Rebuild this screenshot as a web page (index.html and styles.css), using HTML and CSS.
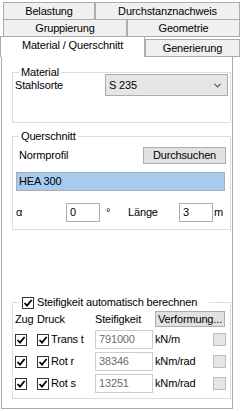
FILE: index.html
```html
<!DOCTYPE html>
<html lang="de">
<head>
  <meta charset="UTF-8">
  <title>Material / Querschnitt</title>
  <link rel="stylesheet" href="styles.css">
</head>
<body>

  <!-- Tab headers (multi-line, selected row at the bottom) -->
  <div class="tabs">
    <div class="tab-row row-top">
      <div class="tab tab-belastung">Belastung</div>
      <div class="tab tab-durchstanz">Durchstanznachweis</div>
    </div>
    <div class="tab-row row-mid">
      <div class="tab tab-gruppierung">Gruppierung</div>
      <div class="tab tab-geometrie">Geometrie</div>
    </div>
    <div class="tab-row row-active">
      <div class="tab tab-selected">Material / Querschnitt</div>
      <div class="tab tab-generierung">Generierung</div>
    </div>
  </div>

  <div class="panel">

    <!-- Material -->
    <fieldset class="group group-material">
      <legend>Material</legend>
      <div class="material-row">
        <span>Stahlsorte</span>
        <div class="combo">
          <span>S 235</span>
          <svg width="7" height="5" viewBox="0 0 7 5"><path d="M0.5 0.8 L3.5 3.8 L6.5 0.8" fill="none" stroke="#5a5a5a" stroke-width="1.2"/></svg>
        </div>
      </div>
    </fieldset>

    <!-- Querschnitt -->
    <fieldset class="group group-section">
      <legend>Querschnitt</legend>
      <div class="profile-head">
        <span>Normprofil</span>
        <div class="button btn-search">Durchsuchen</div>
      </div>
      <div class="profile-name">HEA 300</div>
      <div class="angle-row">
        <span>&alpha;</span>
        <div class="text-input">0</div>
        <span class="degree">&deg;</span>
        <span>Länge</span>
        <div class="text-input">3</div>
        <span class="meter">m</span>
      </div>
    </fieldset>

    <!-- Steifigkeit -->
    <fieldset class="group group-stiff">
      <legend class="legend-check">
        <span class="check"><svg viewBox="0 0 10 10" width="10" height="10"><path d="M1.5 5 L4 7.6 L8.6 2" fill="none" stroke="#000" stroke-width="1.8"/></svg></span>
        <span>Steifigkeit automatisch berechnen</span>
      </legend>
      <div class="stiff-grid">
        <span>Zug</span>
        <span>Druck</span>
        <span>Steifigkeit</span>
        <div class="button btn-deform">Verformung...</div>

        <span class="check"><svg viewBox="0 0 10 10" width="10" height="10"><path d="M1.5 5 L4 7.6 L8.6 2" fill="none" stroke="#000" stroke-width="1.8"/></svg></span>
        <div class="check-label">
          <span class="check"><svg viewBox="0 0 10 10" width="10" height="10"><path d="M1.5 5 L4 7.6 L8.6 2" fill="none" stroke="#000" stroke-width="1.8"/></svg></span>
          <span>Trans t</span>
        </div>
        <div class="value-input">791000</div>
        <span>kN/m</span>
        <span class="flag"></span>

        <span class="check"><svg viewBox="0 0 10 10" width="10" height="10"><path d="M1.5 5 L4 7.6 L8.6 2" fill="none" stroke="#000" stroke-width="1.8"/></svg></span>
        <div class="check-label">
          <span class="check"><svg viewBox="0 0 10 10" width="10" height="10"><path d="M1.5 5 L4 7.6 L8.6 2" fill="none" stroke="#000" stroke-width="1.8"/></svg></span>
          <span>Rot r</span>
        </div>
        <div class="value-input">38346</div>
        <span>kNm/rad</span>
        <span class="flag"></span>

        <span class="check"><svg viewBox="0 0 10 10" width="10" height="10"><path d="M1.5 5 L4 7.6 L8.6 2" fill="none" stroke="#000" stroke-width="1.8"/></svg></span>
        <div class="check-label">
          <span class="check"><svg viewBox="0 0 10 10" width="10" height="10"><path d="M1.5 5 L4 7.6 L8.6 2" fill="none" stroke="#000" stroke-width="1.8"/></svg></span>
          <span>Rot s</span>
        </div>
        <div class="value-input">13251</div>
        <span>kNm/rad</span>
        <span class="flag"></span>
      </div>
    </fieldset>

  </div>

</body>
</html>
```

FILE: styles.css
```css
/* General Reset */
* {
  box-sizing: border-box;
}

body {
  margin: 0;
  background: #fff;
  color: #000;
  font-family: "Liberation Sans", Arial, sans-serif;
  font-size: 11px;
  line-height: 13px;
  letter-spacing: -0.15px;
}

/* Tabs */
.tabs {
  padding-top: 2px;
}

.tab-row {
  display: flex;
}

.tab {
  border: 1px solid #acacac;
  background: #f0f0f0;
  text-align: center;
  white-space: nowrap;
}

.row-top {
  margin-left: 3px;
}

.row-top .tab {
  height: 18px;
  line-height: 16px;
}

.tab-belastung {
  width: 92px;
}

.tab-durchstanz {
  width: 145px;
}

.row-mid {
  margin-left: 3px;
  margin-top: -1px;
}

.row-mid .tab {
  height: 18px;
  line-height: 17px;
}

.tab-gruppierung {
  width: 124px;
}

.tab-geometrie {
  width: 113px;
}

.row-active {
  align-items: flex-end;
  margin-top: -1px;
  margin-bottom: -1px;
}

.tab-selected {
  position: relative;
  z-index: 1;
  width: 145px;
  height: 21px;
  padding-top: 2px;
  background: #fff;
  border-bottom: none;
}

.tab-generierung {
  width: 95px;
  height: 18px;
  line-height: 16px;
}

/* Tab page */
.panel {
  width: 232px;
  margin-left: 1px;
  padding-bottom: 9px;
  border: 1px solid #acacac;
}

.group {
  min-width: 0;
  margin: 0 1px 0 10px;
  padding: 0;
  border: 1px solid #dcdcdc;
}

.group legend {
  margin-left: 6px;
  padding: 0 2px;
  line-height: 13px;
}

/* Material */
.group-material {
  margin-top: 9px;
  padding-bottom: 26px;
}

.material-row {
  display: flex;
  justify-content: space-between;
  align-items: center;
  height: 22px;
  margin-top: -5px;
  padding: 0 2px;
}

.combo {
  display: flex;
  justify-content: space-between;
  align-items: center;
  width: 123px;
  height: 22px;
  padding: 0 6px 0 3px;
  border: 1px solid #acacac;
  background: #e5e5e5;
}

/* Querschnitt */
.group-section {
  margin-top: 7px;
  padding-bottom: 7px;
}

.profile-head {
  display: flex;
  justify-content: space-between;
  align-items: center;
  margin-top: 4px;
  padding: 0 4px 0 6px;
}

.button {
  height: 17px;
  border: 1px solid #adadad;
  background: #e1e1e1;
  text-align: center;
  line-height: 15px;
  white-space: nowrap;
}

.btn-search {
  width: 83px;
}

.profile-name {
  height: 19px;
  margin: 8px 5px 0 3px;
  padding-left: 2px;
  border: 1px solid #abadb3;
  background: #a6caf0;
  line-height: 17px;
}

.angle-row {
  display: grid;
  grid-template-columns: 50px 34px 28px 51px 34px auto;
  align-items: center;
  margin-top: 12px;
  padding-left: 3px;
}

.text-input {
  height: 19px;
  padding-left: 3px;
  border: 1px solid #abadb3;
  background: #fff;
  line-height: 17px;
}

.degree {
  padding-left: 6px;
}

.meter {
  padding-left: 1px;
}

/* Steifigkeit */
.group-stiff {
  margin-top: 66px;
  padding-bottom: 5px;
}

.group .legend-check {
  display: flex;
  align-items: center;
  gap: 3px;
  padding: 0 12px 0 3px;
}

.check {
  display: inline-flex;
  align-items: center;
  justify-content: center;
  width: 12px;
  height: 12px;
  border: 1px solid #333;
  background: #fff;
}

.stiff-grid {
  display: grid;
  grid-template-columns: 22px 58px 60px 58px 13px;
  grid-template-rows: 16px repeat(3, 19px);
  row-gap: 3px;
  align-items: center;
  margin-top: 2px;
  padding-left: 2px;
  white-space: nowrap;
}

.btn-deform {
  grid-column: 4 / 6;
  width: 70px;
  height: 16px;
  line-height: 14px;
}

.check-label {
  display: flex;
  align-items: center;
  gap: 2px;
}

.value-input {
  width: 58px;
  height: 19px;
  padding-left: 3px;
  border: 1px solid #ccc;
  background: #fff;
  color: #6d6d6d;
  line-height: 17px;
}

.flag {
  width: 13px;
  height: 13px;
  border: 1px solid #bcbcbc;
  background: #e6e6e6;
}
```
